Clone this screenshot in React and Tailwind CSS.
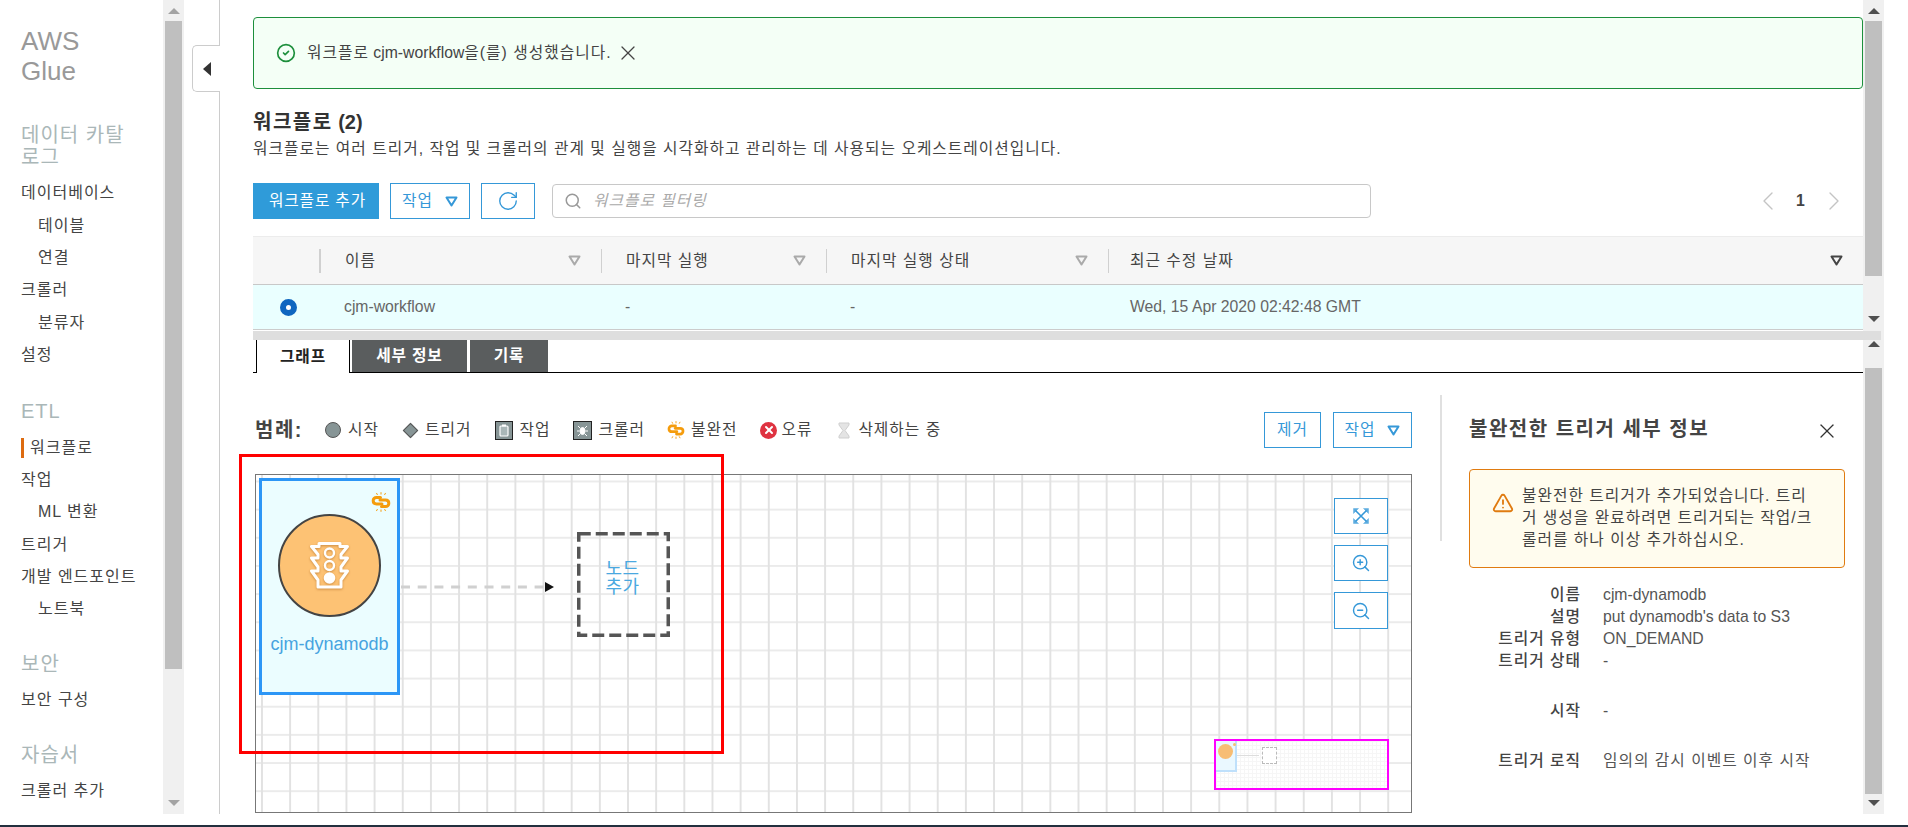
import { CircleCheck, ChevronLeft, ChevronRight, Search, RotateCw, X, TriangleAlert, ZoomIn, ZoomOut } from 'lucide-react'

const navGroups = [
  {
    title: '데이터 카탈로그',
    wrap: true,
    gap: 'mt-[38px]',
    items: [
      { label: '데이터베이스' },
      { label: '테이블', sub: true },
      { label: '연결', sub: true },
      { label: '크롤러' },
      { label: '분류자', sub: true },
      { label: '설정' },
    ],
  },
  {
    title: 'ETL',
    gap: 'mt-[29px]',
    items: [
      { label: '워크플로', active: true },
      { label: '작업' },
      { label: 'ML 변환', sub: true },
      { label: '트리거' },
      { label: '개발 엔드포인트' },
      { label: '노트북', sub: true },
    ],
  },
  { title: '보안', gap: 'mt-[27px]', items: [{ label: '보안 구성' }] },
  { title: '자습서', gap: 'mt-[28px]', items: [{ label: '크롤러 추가' }] },
]

const columns = [
  { label: '이름', width: 'w-[281px]', pad: 'pl-[24px]' },
  { label: '마지막 실행', width: 'w-[225px]', pad: 'pl-[24px]' },
  { label: '마지막 실행 상태', width: 'w-[282px]', pad: 'pl-[24px]' },
  { label: '최근 수정 날짜', width: 'flex-1', pad: 'pl-[21px]', dark: true },
]

const details = [
  { label: '이름', value: 'cjm-dynamodb' },
  { label: '설명', value: "put dynamodb's data to S3" },
  { label: '트리거 유형', value: 'ON_DEMAND' },
  { label: '트리거 상태', value: '-' },
  { label: '시작', value: '-', gap: 'mt-[28px]' },
  { label: '트리거 로직', value: '임의의 감시 이벤트 이후 시작', gap: 'mt-[28px]', korean: true },
]

function Caret({ className }) {
  return (
    <svg width="13" height="11" viewBox="0 0 13 11" className={className}>
      <path d="M1.5 1.5h10L6.5 9.5z" fill="none" stroke="currentColor" strokeWidth="2" strokeLinejoin="round" />
    </svg>
  )
}

function ScrollArrow({ up, dark }) {
  return (
    <div className={`h-0 w-0 border-x-[6px] border-x-transparent ${up ? 'border-b-[6px]' : 'border-t-[6px]'} ${dark ? 'border-b-[#505050] border-t-[#505050]' : 'border-b-[#a3a3a3] border-t-[#a3a3a3]'}`} />
  )
}

function Scrollbar({ topClass, thumbClass, bottomClass, dark }) {
  return (
    <div className="flex h-full w-[21px] shrink-0 flex-col items-center bg-[#f0f0f0]">
      <div className={topClass}><ScrollArrow up dark={dark} /></div>
      <div className={`w-[17px] bg-[#bfbfbf] ${thumbClass}`} />
      <div className={`mt-auto ${bottomClass}`}><ScrollArrow dark={dark} /></div>
    </div>
  )
}

function BrokenLink({ size = 20 }) {
  return (
    <svg width={size} height={size} viewBox="0 0 20 20" fill="none" stroke="#f59c0c" strokeLinecap="round">
      <path d="M9.500 5.500H5.500a3.200 3.200 0 0 0-3.300 3.300c0 1.900 1.500 3.100 3.300 3.100h5.500" strokeWidth="3" />
      <path d="M10.500 14.500h4a3.200 3.200 0 0 0 3.300-3.300c0-1.900-1.500-3.100-3.300-3.100H9" strokeWidth="3" />
      <path d="M10 .6v1.500M5.600 1.300l.7 1.300M14.400 1.300l-.7 1.300M10 17.900v1.500M5.600 18.700l.7-1.300M14.400 18.700l-.7-1.300" strokeWidth="1" />
    </svg>
  )
}

function TrafficLight() {
  return (
    <svg width="39" height="49" viewBox="0 0 39 49" fill="none" stroke="#fff" strokeWidth="3" strokeLinejoin="round" className="drop-shadow-[0_1px_1px_rgba(160,90,20,0.5)]">
      <path d="M9 2.500H30V5.500H37.500L31 13.500V17H37.500L31 26V30H37.500L31 39V46H8V39L1.500 30H8V26L1.500 17H8V13.500L1.500 5.500H9Z" />
      <circle cx="19.500" cy="12" r="4.500" strokeWidth="2.400" />
      <circle cx="19.500" cy="24.500" r="4.500" strokeWidth="2.400" />
      <circle cx="19.500" cy="37" r="5.800" fill="#fff" stroke="none" />
    </svg>
  )
}

function Sidebar() {
  return (
    <nav className="h-full w-[163px] shrink-0 overflow-hidden pl-[21px]">
      <div className="pt-[26px] text-[26px] leading-[30px] text-[#999]">AWS<br />Glue</div>
      {navGroups.map((group) => (
        <section key={group.title} className={group.gap}>
          <h3 className={`mb-[9px] text-[20px] leading-[22px] tracking-[1px] text-[#aab7b8] ${group.wrap ? 'w-[115px]' : ''}`}>{group.title}</h3>
          {group.items.map((item) => (
            <div key={item.label} className={`flex h-[32.4px] items-center text-[16px] tracking-[1px] text-[#444] ${item.sub ? 'pl-[17px]' : ''}`}>
              {item.active && <span className="mr-[6px] h-[20px] w-[3px] bg-[#dd6b10]" />}
              {item.label}
            </div>
          ))}
        </section>
      ))}
    </nav>
  )
}

function TopPanel() {
  return (
    <div className="min-w-0 flex-1 pl-[33px]">
      <div className="mt-[17px] flex h-[72px] items-center rounded-[4px] border border-[#1d8f3c] bg-[#f4fff6] pl-[22px] text-[15.75px] text-[#444]">
        <CircleCheck size={20} strokeWidth={2} className="text-[#1d8f3c]" />
        <span className="ml-[11px]"><span className="tracking-[1px]">워크플로</span> cjm-workflow<span className="tracking-[1px]">을(를) 생성했습니다.</span></span>
        <X size={24} strokeWidth={1.300} className="ml-[4px] text-[#444]" />
      </div>
      <h1 className="mt-[21px] text-[20px] font-bold leading-[24px] text-[#333]"><span className="tracking-[1.500px]">워크플로</span> (2)</h1>
      <p className="mt-[5px] text-[15.75px] leading-[20px] tracking-[1px] text-[#444]">워크플로는 여러 트리거, 작업 및 크롤러의 관계 및 실행을 시각화하고 관리하는 데 사용되는 오케스트레이션입니다.</p>
      <div className="mt-[24px] flex h-[36px] items-center">
        <button className="h-full w-[126px] bg-[#2f9bd9] pl-[3px] text-[15.75px] tracking-[0.800px] text-white">워크플로 추가</button>
        <button className="ml-[11px] flex h-full w-[80px] items-center justify-center gap-[12px] border border-[#3598d8] text-[15.75px] tracking-[1px] text-[#3598d8]">작업<Caret /></button>
        <button className="ml-[11px] flex h-full w-[54px] items-center justify-center border border-[#3598d8] text-[#3598d8]">
          <RotateCw size={22} strokeWidth={1.500} />
        </button>
        <div className="ml-[17px] flex h-[34px] w-[819px] items-center rounded-[4px] border border-[#c8c8c8] pl-[11px] text-[15.75px] italic tracking-[1px] text-[#aaa]">
          <Search size={18} strokeWidth={2} className="mr-[11px] text-[#999]" />
          워크플로 필터링
        </div>
        <div className="ml-[380px] flex items-center text-[#444]">
          <span className="flex w-[33px] justify-center"><ChevronLeft size={32} strokeWidth={1} className="shrink-0 text-[#c4c4c4]" /></span>
          <span className="flex w-[33px] justify-center text-[15.75px] font-bold">1</span>
          <span className="flex w-[33px] justify-center"><ChevronRight size={32} strokeWidth={1} className="shrink-0 text-[#c4c4c4]" /></span>
        </div>
      </div>
      <div className="mt-[17px] flex h-[49px] items-center border-y border-t-[#ececec] border-b-[#c8c8c8] bg-[#f6f6f6] text-[15.75px] text-[#444]">
        <div className="h-[24px] w-[67px] border-r border-[#d0d0d0]" />
        {columns.map((col) => (
          <div key={col.label} className={`flex h-[24px] items-center justify-between border-l border-[#d0d0d0] pr-[20px] ${col.pad} ${col.width}`}>
            <span className="tracking-[1px]">{col.label}</span>
            <Caret className={col.dark ? 'text-[#444]' : 'text-[#aaa]'} />
          </div>
        ))}
      </div>
      <div className="flex h-[45px] items-center border-b border-[#ccc] bg-[#eaffff] text-[15.75px] text-[#666]">
        <div className="flex w-[67px] justify-center pl-[4px]">
          <span className="h-[17px] w-[17px] rounded-full border-[6px] border-[#0f66c0] bg-white" />
        </div>
        <div className="w-[281px] pl-[24px]">cjm-workflow</div>
        <div className="w-[225px] pl-[24px]">-</div>
        <div className="w-[282px] pl-[24px]">-</div>
        <div className="flex-1 pl-[22px]">Wed, 15 Apr 2020 02:42:48 GMT</div>
      </div>
    </div>
  )
}

function Legend() {
  return (
    <div className="flex h-[36px] items-center text-[15.75px] tracking-[1px] text-[#444]">
      <span className="mr-[22px] text-[20px] font-bold tracking-[1.500px]">범례:</span>
      <span className="h-[16px] w-[16px] shrink-0 rounded-full border border-[#555] bg-[#879596]" />
      <span className="ml-[7px]">시작</span>
      <span className="ml-[26px] mr-[9px] h-[11px] w-[11px] shrink-0 rotate-45 border border-[#555] bg-[#879596]" />
      <span>트리거</span>
      <span className="ml-[24px] mr-[6px] flex h-[19px] w-[18px] shrink-0 items-center justify-center border border-[#222] bg-[#879596]">
        <svg width="10" height="13" viewBox="0 0 10 13" fill="none" stroke="#fff" strokeWidth="1.200">
          <rect x="1" y="2" width="8" height="10" rx="1" fill="#aab7b8" />
          <rect x="3" y="0.500" width="4" height="2" fill="#fff" stroke="none" />
        </svg>
      </span>
      <span>작업</span>
      <span className="ml-[23px] mr-[6px] flex h-[19px] w-[19px] shrink-0 items-center justify-center border border-[#222] bg-[#879596]">
        <svg width="13" height="13" viewBox="0 0 13 13" stroke="#fff" strokeWidth="1" fill="#fff">
          <ellipse cx="6.500" cy="7" rx="2.500" ry="3.500" />
          <path d="M4 4L2 2M9 4l2-2M3.500 7H1M9.500 7H12M4 10l-2 2M9 10l2 2" fill="none" />
        </svg>
      </span>
      <span>크롤러</span>
      <span className="ml-[22px] mr-[6px] shrink-0"><BrokenLink size={18} /></span>
      <span>불완전</span>
      <span className="ml-[23px] mr-[4px] flex h-[17px] w-[17px] shrink-0 items-center justify-center rounded-full bg-[#df3341] text-white">
        <X size={12} strokeWidth={4} />
      </span>
      <span>오류</span>
      <svg width="12" height="17" viewBox="0 0 12 17" className="ml-[26px] mr-[8px] shrink-0">
        <path d="M1 1h10v2L7 8.500l4 5.500v2H1v-2l4-5.500L1 3z" fill="#e4e4e4" stroke="#cfcfcf" />
      </svg>
      <span>삭제하는 중</span>
    </div>
  )
}

function GraphCanvas() {
  return (
    <div className="relative mt-[26px] h-[339px] w-[1157px] border border-[#777] bg-white bg-[linear-gradient(to_right,#e2e2e2_1.500px,transparent_1.500px),linear-gradient(to_bottom,#ebebeb_2px,transparent_2px)] bg-[size:28.17px_28.17px] bg-[position:5px_5.500px]">
      {/* trigger node */}
      <div className="absolute left-[3px] top-[3px] flex h-[217px] w-[141px] flex-col items-center border-[3px] border-[#2c96f6] bg-[#ebfdff]">
        <span className="absolute right-[6px] top-[11px]"><BrokenLink /></span>
        <div className="mt-[33px] flex h-[103px] w-[103px] items-center justify-center rounded-full border-2 border-[#444] bg-[#fdc274]">
          <TrafficLight />
        </div>
        <div className="mt-[14px] text-[18px] text-[#46a3e0]">cjm-dynamodb</div>
      </div>

      {/* edge */}
      <svg className="absolute left-[145px] top-[104px]" width="155" height="16" viewBox="0 0 155 16">
        <path d="M0 8h144" stroke="#d0d0d0" strokeWidth="3" strokeDasharray="9 7.700" />
        <path d="M144 3l9 5-9 5z" fill="#111" />
      </svg>

      {/* add node */}
      <div className="absolute left-[321px] top-[57px] flex h-[105px] w-[93px] items-center justify-center pb-[14px] pr-[2px] text-center text-[18px] leading-[18px] tracking-[0.400px] text-[#4aa8e0]">
        <svg className="absolute inset-0" width="93" height="105" viewBox="0 0 93 105" fill="none">
          <rect x="1.750" y="1.750" width="89.500" height="101.500" stroke="#555" strokeWidth="3.500" strokeDasharray="12 5" />
        </svg>
        <span>노드<br />추가</span>
      </div>

      {/* zoom controls */}
      <div className="absolute left-[1078px] top-[23px] flex flex-col gap-[11px]">
        <button className="flex h-[36px] w-[54px] items-center justify-center border border-[#3598d8] bg-white text-[#3598d8]">
          <svg width="16" height="16" viewBox="0 0 16 16" fill="none" stroke="currentColor" strokeWidth="1.600">
            <path d="M.5 5.500V.5h5zM10.500.5h5v5zM15.500 10.500v5h-5zM5.500 15.500h-5v-5z" fill="currentColor" strokeWidth="0.500" opacity="0.800" />
            <path d="M2.500 2.500l11 11M13.500 2.500l-11 11" />
          </svg>
        </button>
        <button className="flex h-[36px] w-[54px] items-center justify-center border border-[#3598d8] bg-white text-[#3598d8]"><ZoomIn size={20} strokeWidth={1.700} /></button>
        <button className="flex h-[37px] w-[54px] items-center justify-center border border-[#3598d8] bg-white text-[#3598d8]"><ZoomOut size={20} strokeWidth={1.700} /></button>
      </div>

      {/* minimap */}
      <div className="absolute left-[958px] top-[264px] h-[51px] w-[175px] border-2 border-[#f0f] bg-white bg-[linear-gradient(to_right,#f6f6f6_1px,transparent_1px),linear-gradient(to_bottom,#f6f6f6_1px,transparent_1px)] bg-[size:4px_4px]">
        <div className="absolute left-0 top-0 flex h-[31px] w-[21px] items-center justify-center border-b-2 border-r-2 border-[#bfe0fb] bg-[#eaf8ff] pb-[9px]">
          <span className="h-[15px] w-[15px] rounded-full bg-[#f7bd74]" />
        </div>
        <span className="absolute left-[17px] top-[2px] h-[3px] w-[3px] rounded-full bg-[#f7bd74]" />
        <span className="absolute left-[21px] top-[14px] h-px w-[22px] bg-[#ddd]" />
        <span className="absolute left-[46px] top-[6px] h-[17px] w-[15px] border border-dashed border-[#bbb] bg-white" />
      </div>
    </div>
  )
}

function DetailTabs() {
  return (
    <div className="ml-[33px] flex h-[33px] shrink-0 items-stretch border-b border-black pl-[3px] text-[15.75px] font-bold tracking-[0.800px]">
      <div className="-mb-px flex w-[94px] items-center justify-center border-x border-black bg-white text-[#222]">그래프</div>
      <div className="ml-[2px] flex w-[115px] items-center justify-center bg-[#5a5d5e] text-white">세부 정보</div>
      <div className="ml-[3px] flex w-[78px] items-center justify-center bg-[#5a5d5e] text-white">기록</div>
    </div>
  )
}

function BottomPanel() {
  return (
    <div className="flex min-w-0 flex-1 flex-col">
      <DetailTabs />
      <div className="flex min-h-0 flex-1 pl-[33px]">
        <div className="w-[1159px] shrink-0 pl-[2px] pt-[39px]">
          <div className="flex items-center justify-between">
            <Legend />
            <div className="flex gap-[12px]">
              <button className="h-[36px] w-[57px] border border-[#3598d8] text-[15.75px] tracking-[1px] text-[#3598d8]">제거</button>
              <button className="flex h-[36px] w-[79px] items-center justify-center gap-[12px] border border-[#3598d8] text-[15.75px] tracking-[1px] text-[#3598d8]">작업<Caret /></button>
            </div>
          </div>
          <GraphCanvas />
        </div>
        <div className="ml-[28px] mt-[22px] h-[146px] w-[2px] shrink-0 bg-[#e0e0e0]" />
        <aside className="ml-[27px] w-[376px] shrink-0 pt-[42px]">
          <div className="flex items-center justify-between pr-[6px]">
            <h2 className="text-[20px] font-bold leading-[24px] tracking-[1.500px] text-[#444]">불완전한 트리거 세부 정보</h2>
            <X size={24} strokeWidth={1.300} className="mt-[4px] text-[#333]" />
          </div>
          <div className="mt-[26px] flex h-[99px] items-start rounded-[4px] border border-[#e07b10] bg-[#fffcee] pl-[22px] pt-[15px]">
            <TriangleAlert size={22} strokeWidth={2} className="mt-[7px] shrink-0 text-[#e07b10]" />
            <p className="ml-[8px] whitespace-nowrap text-[15.75px] leading-[22px] tracking-[1px] text-[#444]">불완전한 트리거가 추가되었습니다. 트리<br />거 생성을 완료하려면 트리거되는 작업/크<br />롤러를 하나 이상 추가하십시오.</p>
          </div>
          <div className="mt-[16px] text-[15.75px] leading-[22px]">
            {details.map((row) => (
              <div key={row.label} className={`flex ${row.gap || ''}`}>
                <span className="w-[112px] text-right font-medium tracking-[1px] text-[#444]">{row.label}</span>
                <span className={`ml-[22px] text-[#555] ${row.korean ? 'tracking-[1px]' : ''}`}>{row.value}</span>
              </div>
            ))}
          </div>
        </aside>
      </div>
    </div>
  )
}

export default function App() {
  return (
    <div className="flex h-screen w-full flex-col overflow-hidden bg-white font-['Liberation_Sans','Noto_Sans_CJK_KR',sans-serif]">
      <div className="relative flex h-[814px] shrink-0">
        <Sidebar />
        <Scrollbar topClass="mt-[8px]" thumbClass="mt-[7px] h-[648px]" bottomClass="mb-[8px]" />
        <div className="relative w-[36px] shrink-0 border-r border-[#ccc]">
          <button className="absolute left-[8px] top-[45px] flex h-[47px] w-[28px] items-center justify-center rounded-l-[5px] border border-r-0 border-[#ccc] bg-white">
            <span className="h-0 w-0 border-y-[7px] border-r-[8px] border-y-transparent border-r-[#333]" />
          </button>
        </div>
        <div className="flex w-[1664px] shrink-0 flex-col">
          <div className="flex h-[331px] shrink-0">
            <TopPanel />
            <Scrollbar topClass="mt-[8px]" thumbClass="mt-[7px] h-[255px]" bottomClass="mb-[9px]" dark />
          </div>
          <div className="flex h-[9px] shrink-0">
            <div className="ml-[33px] flex-1 bg-[#dedede]" />
            <div className="w-[3px] bg-[#f0f0f0]" />
          </div>
          <div className="flex min-h-0 flex-1">
            <BottomPanel />
            <Scrollbar topClass="mt-px" thumbClass="mt-[21px] h-[426px]" bottomClass="mb-[8px]" dark />
          </div>
        </div>
        {/* red annotation around the node */}
        <div className="pointer-events-none absolute left-[239px] top-[454px] h-[300px] w-[485px] border-[3px] border-[#f00]" />
      </div>
      <div className="mt-auto h-[2px] shrink-0 bg-[#232f3e]" />
    </div>
  )
}
